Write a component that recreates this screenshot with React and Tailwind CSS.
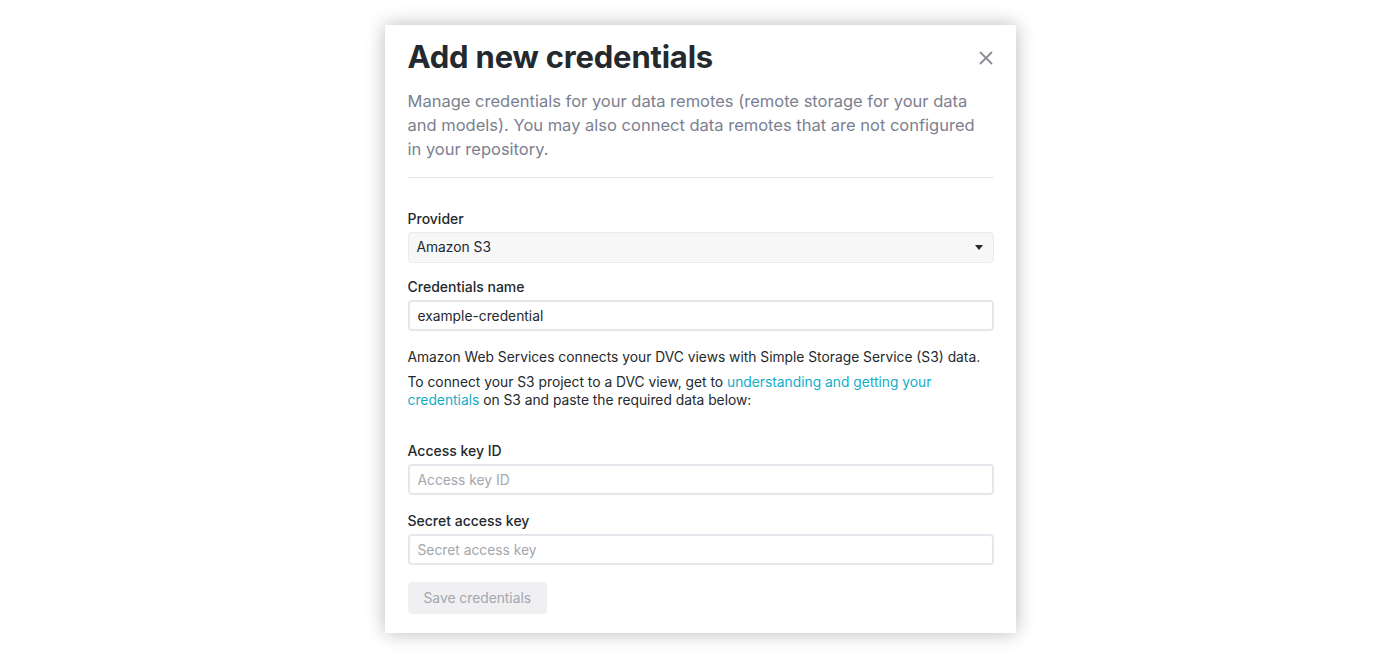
import { X } from 'lucide-react';

function Field({ label, placeholder, value }) {
  return (
    <div className="flex flex-col">
      <label className="text-[14px] font-medium leading-[20px] text-[#24292e] mb-[3px]">{label}</label>
      <input
        readOnly
        value={value}
        placeholder={placeholder}
        className="h-[31px] w-full px-[8px] text-[13.8px] text-[#24292e] placeholder:text-[#a3a7ae] border-2 border-[#e6e7ec] rounded-[4px] outline-none bg-white"
      />
    </div>
  );
}

export default function App() {
  return (
    <div className="min-h-[658px] w-full bg-white flex justify-center pt-[25px]" style={{ fontFamily: 'Inter, "Noto Sans", sans-serif' }}>
      <div className="w-[631px] h-[608px] bg-white shadow-[0_0_18px_rgba(0,0,0,0.28)] pl-[23px] pr-[22px] pt-[12px]">
        <div className="flex items-start justify-between">
          <h1 className="text-[31px] leading-[40px] font-bold text-[#24292e] tracking-[-0.2px]">Add new credentials</h1>
          <button className="mt-[10px] mr-[-3px] text-[#8a8e95]">
            <X size={22} strokeWidth={2} />
          </button>
        </div>
        <p className="mt-[12px] pr-[12px] text-[16.5px] leading-[24px] text-[#7b8190]">
          Manage credentials for your data remotes (remote storage for your data and models). You may also connect data remotes that are not configured in your repository.
        </p>
        <div className="mt-[16px] h-px bg-[#e4e5e9]" />

        <div className="mt-[31px] flex flex-col">
          <label className="text-[14px] font-medium leading-[20px] text-[#24292e] mb-[3px]">Provider</label>
          <div className="h-[31px] flex items-center justify-between px-[8px] bg-[#f7f7f8] border border-[#ebebee] rounded-[4px]">
            <span className="text-[13.8px] text-[#24292e]">Amazon S3</span>
            <svg width="8" height="5" viewBox="0 0 8 5" className="mr-[2px]">
              <path d="M0 0h8L4 5z" fill="#24292e" />
            </svg>
          </div>
        </div>

        <div className="mt-[14px]">
          <Field label="Credentials name" value="example-credential" />
        </div>

        <p className="mt-[17px] text-[13.8px] leading-[18px] text-[#24292e]">
          Amazon Web Services connects your DVC views with Simple Storage Service (S3) data.
        </p>
        <p className="mt-[7px] text-[13.8px] leading-[18px] text-[#24292e]">
          To connect your S3 project to a DVC view, get to{' '}
          <a className="text-[#13adc7]">understanding and getting your credentials</a> on S3 and paste the required data below:
        </p>

        <div className="mt-[32px]">
          <Field label="Access key ID" placeholder="Access key ID" value="" />
        </div>
        <div className="mt-[16px]">
          <Field label="Secret access key" placeholder="Secret access key" value="" />
        </div>

        <button className="mt-[17px] h-[32px] px-[16px] rounded-[4px] bg-[#f0f0f2] text-[13.8px] text-[#a3a7ae]">
          Save credentials
        </button>
      </div>
    </div>
  );
}
